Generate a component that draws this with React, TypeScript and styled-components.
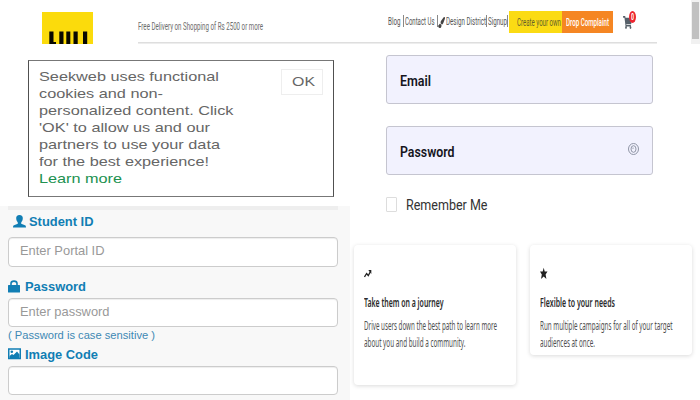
import React, { useLayoutEffect, useRef, useState } from "react";
import styled, { createGlobalStyle } from "styled-components";
import { FaShoppingCart, FaPaintBrush } from "react-icons/fa";

const GlobalStyle = createGlobalStyle`
  * { box-sizing: border-box; }
  html, body { margin: 0; padding: 0; background: #fff; overflow: hidden; }
`;

const roboto = 'Roboto, "Liberation Sans", sans-serif';
const arial = '"Liberation Sans", Arial, sans-serif';
const noto = '"Noto Sans", "Open Sans", sans-serif';

/* A single line of text, condensed or widened to fill a given width. */
const Line = styled.span<{ $w: number; $size: number; $lh: number; $color: string; $font: string; $weight?: number }>`
  display: block;
  flex: none;
  width: ${(p) => p.$w}px;
  height: ${(p) => p.$lh}px;
  line-height: ${(p) => p.$lh}px;
  font-family: ${(p) => p.$font};
  font-size: ${(p) => p.$size}px;
  font-weight: ${(p) => p.$weight ?? 400};
  color: ${(p) => p.$color};
  white-space: nowrap;
`;
const Stretch = styled.span`
  display: inline-block;
  transform-origin: 0 50%;
`;

type TextProps = { w: number; size: number; lh: number; color: string; font: string; weight?: number; children: string };
function Text({ w, size, lh, color, font, weight, children }: TextProps) {
  const ref = useRef<HTMLSpanElement>(null);
  const [scale, setScale] = useState(1);
  useLayoutEffect(() => {
    if (ref.current) setScale(w / parseFloat(getComputedStyle(ref.current).width));
  }, [w, children]);
  return (
    <Line $w={w} $size={size} $lh={lh} $color={color} $font={font} $weight={weight}>
      <Stretch ref={ref} style={{ transform: `scaleX(${scale})` }}>{children}</Stretch>
    </Line>
  );
}

const Page = styled.div`
  width: 700px;
  height: 400px;
  display: flex;
  flex-direction: column;
  background: #fff;
  overflow: hidden;
`;
const Header = styled.header`
  display: flex;
  height: 44px;
  flex: none;
  padding-left: 42px;
`;
const Logo = styled.div`
  width: 51px;
  height: 32px;
  margin: 12px 45px 0 0;
  background: #fbdb0c;
  svg { display: block; }
`;
const Bar = styled.div`
  display: flex;
  width: 519px;
  height: 44px;
  border-bottom: 1px solid #ededed;
  box-shadow: inset 0 -1px #dedede;
`;
const Slogan = styled.div`
  width: 250px;
  padding-top: 18px;
`;
const Nav = styled.nav`
  display: flex;
  align-items: center;
  height: 22px;
  margin-top: 11px;
`;
const Divider = styled.i<{ $l?: number; $r?: number }>`
  width: 1px;
  height: 12px;
  flex: none;
  background: #888;
  margin: 0 ${(p) => p.$r ?? 0}px 2px ${(p) => p.$l ?? 0}px;
`;
const Brush = styled(FaPaintBrush)`
  width: 7px;
  height: 11px;
  flex: none;
  color: #444;
  margin-right: 1px;
`;
const NavText = styled.div`
  margin-top: -2px;
`;
const NavButton = styled.div<{ $bg: string; $w: number; $pad: number }>`
  display: flex;
  align-items: center;
  flex: none;
  width: ${(p) => p.$w}px;
  height: 22px;
  padding-left: ${(p) => p.$pad}px;
  background: ${(p) => p.$bg};
`;
const Cart = styled.div`
  position: relative;
  width: 14px;
  height: 22px;
  flex: none;
  margin-left: 10px;
  color: #566069;
  svg { display: block; margin-top: 5px; width: 9px; height: 13px; }
`;
const Badge = styled.span`
  position: absolute;
  left: 6px;
  top: 0;
  width: 7px;
  height: 12px;
  border-radius: 50%;
  background: #ed2630;
  display: flex;
  justify-content: center;
`;
const ScrollTrack = styled.div`
  width: 9px;
  height: 44px;
  margin-left: auto;
  background: #f1f1f1;
  padding: 2px 1px 0;
`;
const Thumb = styled.div`
  height: 37px;
  background: #c1c1c1;
`;

const Columns = styled.main`
  display: flex;
  flex: 1;
`;
const Left = styled.section`
  width: 350px;
  display: flex;
  flex-direction: column;
`;
const Cookie = styled.div`
  display: flex;
  justify-content: space-between;
  width: 306px;
  height: 137px;
  margin: 16px 0 9px 28px;
  padding: 7px 10px 0 9.5px;
  border: 1px solid #505050;
  border-top-color: #777;
  border-bottom-color: #777;
`;
const OkButton = styled.button`
  display: flex;
  justify-content: center;
  width: 42px;
  height: 26px;
  margin: 1px 0 0;
  padding: 3px 0 0;
  background: #fff;
  border: 1px solid #eee;
`;
const Portal = styled.div`
  flex: 1;
  background: #f8f8f8;
  padding: 0 12px 0 8px;
`;
const Strip = styled.div`
  height: 4px;
  background: #eee;
`;
const Label = styled.div<{ $top: number; $indent?: number; $gap: number }>`
  display: flex;
  align-items: center;
  height: 16px;
  gap: ${(p) => p.$gap}px;
  margin-top: ${(p) => p.$top}px;
  padding-left: ${(p) => p.$indent ?? 0}px;
  svg { display: block; flex: none; margin-top: -2px; }
`;
const Input = styled.div<{ $top: number; $h: number }>`
  display: flex;
  align-items: center;
  width: 330px;
  height: ${(p) => p.$h}px;
  margin-top: ${(p) => p.$top}px;
  padding: 0 0 1.5px 11px;
  background: #fff;
  border: 1px solid #ccc;
  border-radius: 4px;
  box-shadow: inset 0 1px 1px #eee;
`;
const Note = styled.div`
  padding-top: 1px;
`;

const Right = styled.section`
  width: 350px;
  display: flex;
  flex-direction: column;
`;
const Field = styled.div<{ $top: number }>`
  display: flex;
  align-items: center;
  justify-content: space-between;
  width: 267px;
  height: 49px;
  margin: ${(p) => p.$top}px 0 0 36px;
  padding: 2px 13px 0;
  background: #f2f2fe;
  border: 1px solid #c5c5d0;
  border-radius: 3px;
  svg { margin-top: -5px; }
`;
const Remember = styled.div`
  display: flex;
  align-items: center;
  gap: 8.5px;
  height: 20px;
  margin: 21px 0 0 36px;
`;
const Check = styled.span`
  width: 11px;
  height: 15px;
  margin-top: -3px;
  border: 1px solid #ddd;
  border-radius: 1px;
`;
const Cards = styled.div`
  display: flex;
  align-items: flex-start;
  gap: 13.5px;
  margin: 29px 0 0 4px;
`;
const Card = styled.article<{ $h: number }>`
  width: 162px;
  height: ${(p) => p.$h}px;
  padding: 22px 0 0 10px;
  border-radius: 4px;
  background: #fff;
  box-shadow: 0 1px 4px rgba(0, 0, 0, 0.15);
  svg { display: block; }
`;
const CardTitle = styled.div`
  margin: 10px 0 6px;
`;

const label = { size: 12.5, lh: 16, color: "#117eb4", font: arial, weight: 700 };
const cookie = { size: 13.3, lh: 17, color: "#666", font: arial };
const nav = { size: 11.8, lh: 20, color: "#555", font: roboto };
const title = { size: 12.3, lh: 17, color: "#2b2b2b", font: noto, weight: 600 };
const body = { size: 11.8, lh: 17, color: "#505050", font: noto };
const hint = { size: 13, lh: 18, color: "#999", font: arial };

export default function App() {
  return (
    <>
      <GlobalStyle />
      <Page>
        <Header>
          <Logo>
            <svg width="51" height="32" viewBox="0 0 51 32">
              <path d="M7.300 19.500h4.200V30h2.500v2H7.300zM17.300 19.500h4.200V32h-4.200zM24.300 19.500h4V32h-4zM31.500 19.500h4.200V32h-4.200zM41 19.500h4.200V32H41z" fill="#080800" />
            </svg>
          </Logo>
          <Bar>
            <Slogan><Text {...nav} w={125} size={11} lh={17} color="#6d6d6d">Free Delivery on Shopping of Rs 2500 or more</Text></Slogan>
            <Nav>
              <NavText><Text {...nav} w={12.500}>Blog</Text></NavText>
              <Divider $l={2.5} $r={1} />
              <NavText><Text {...nav} w={29.500}>Contact Us</Text></NavText>
              <Divider $l={2.5} />
              <Brush preserveAspectRatio="none" />
              <NavText><Text {...nav} w={40}>Design District</Text></NavText>
              <Divider $r={1} />
              <NavText><Text {...nav} w={19}>Signup</Text></NavText>
              <Divider $r={1} />
              <NavButton $bg="#fbdb14" $w={53} $pad={8}><Text {...nav} w={44} color="#665f2c">Create your own</Text></NavButton>
              <NavButton $bg="#f58623" $w={51} $pad={4}><Text {...nav} w={43} color="#fff" weight={500}>Drop Complaint</Text></NavButton>
              <Cart>
                <FaShoppingCart preserveAspectRatio="none" />
                <Badge><Text w={3} size={9} lh={12} color="#fff" font={roboto} weight={700}>0</Text></Badge>
              </Cart>
            </Nav>
          </Bar>
          <ScrollTrack><Thumb /></ScrollTrack>
        </Header>
        <Columns>
          <Left>
            <Cookie>
              <div>
                <Text {...cookie} w={180}>Seekweb uses functional</Text>
                <Text {...cookie} w={124}>cookies and non-</Text>
                <Text {...cookie} w={194.500}>personalized content. Click</Text>
                <Text {...cookie} w={171}>'OK' to allow us and our</Text>
                <Text {...cookie} w={181}>partners to use your data</Text>
                <Text {...cookie} w={170}>for the best experience!</Text>
                <Text {...cookie} w={83} color="#219150">Learn more</Text>
              </div>
              <OkButton><Text {...cookie} w={23}>OK</Text></OkButton>
            </Cookie>
            <Portal>
              <Strip />
              <Label $top={4} $indent={4.5} $gap={3.5}>
                <svg width="13" height="13" viewBox="0 0 13 13" fill="#117eb4">
                  <path d="M6.500 0C8.800 0 9.900 1.400 9.800 3.300C9.800 5 9 6.600 8.200 7.400V8.700L12 10.300C12.800 10.700 13 11.500 13 12.500H0C0 11.500.2 10.700 1 10.300L4.800 8.700V7.400C4 6.600 3.200 5 3.200 3.300C3.100 1.400 4.200 0 6.500 0Z" />
                </svg>
                <Text {...label} w={64.500}>Student ID</Text>
              </Label>
              <Input $top={7} $h={30}><Text {...hint} w={84.500}>Enter Portal ID</Text></Input>
              <Label $top={12} $gap={4.5}>
                <svg width="12" height="13" viewBox="0 0 12 13">
                  <path d="M3 6V3.500C3 .3 9 .3 9 3.500V6" fill="none" stroke="#117eb4" strokeWidth="1.600" />
                  <rect y="5" width="12" height="7.500" rx=".5" fill="#117eb4" />
                </svg>
                <Text {...label} w={61}>Password</Text>
              </Label>
              <Input $top={3} $h={29}><Text {...hint} w={89.500}>Enter password</Text></Input>
              <Note><Text w={147} size={11} lh={15} color="#3e88b4" font={arial}>( Password is case sensitive )</Text></Note>
              <Label $top={3.5} $gap={4}>
                <svg width="13" height="12" viewBox="0 0 13 12">
                  <rect x=".75" y="1" width="11.500" height="9.500" fill="#fff" stroke="#117eb4" strokeWidth="1.500" />
                  <circle cx="3.800" cy="3.800" r="1.300" fill="#117eb4" />
                  <path d="M1.500 10V8L4 6L5.500 7L9 3.500L11.500 6.500V10Z" fill="#117eb4" />
                </svg>
                <Text {...label} w={73}>Image Code</Text>
              </Label>
              <Input $top={3.5} $h={29} />
            </Portal>
          </Left>
          <Right>
            <Field $top={11}><Text w={31} size={14.3} lh={20} color="#15151d" font={roboto} weight={600}>Email</Text></Field>
            <Field $top={22}>
              <Text w={54.500} size={14.3} lh={20} color="#15151d" font={roboto} weight={600}>Password</Text>
              <svg width="11" height="12" viewBox="0 0 11 12" fill="none" stroke="#858b9c">
                <ellipse cx="5.500" cy="6" rx="5" ry="5.500" strokeWidth=".9" />
                <ellipse cx="5.500" cy="6" rx="2.500" ry="3.300" strokeWidth=".9" />
                <path d="M5 4.500V6" strokeWidth=".8" />
              </svg>
            </Field>
            <Remember>
              <Check />
              <Text w={81.500} size={14.5} lh={20} color="#333" font={roboto}>Remember Me</Text>
            </Remember>
            <Cards>
              <Card $h={140}>
                <svg width="8" height="17" viewBox="0 0 8 17" fill="none" stroke="#222">
                  <path d="M.5 10L2.600 6.500L4.300 8.500L6.500 4.500" strokeWidth="1.300" />
                  <path d="M4.300 3H7.300V7Z" fill="#222" stroke="none" />
                </svg>
                <CardTitle><Text {...title} w={79.500}>Take them on a journey</Text></CardTitle>
                <Text {...body} w={133}>Drive users down the best path to learn more</Text>
                <Text {...body} w={101.500}>about you and build a community.</Text>
              </Card>
              <Card $h={110}>
                <svg width="8" height="17" viewBox="0 0 8 17" fill="#222">
                  <path d="M3.700 .8L4.700 4.400H7.500L5.600 7.400L6.400 12L3.700 9.600L1 12L1.800 7.400L0 4.400H2.700Z" />
                </svg>
                <CardTitle><Text {...title} w={75}>Flexible to your needs</Text></CardTitle>
                <Text {...body} w={132.500}>Run multiple campaigns for all of your target</Text>
                <Text {...body} w={55}>audiences at once.</Text>
              </Card>
            </Cards>
          </Right>
        </Columns>
      </Page>
    </>
  );
}
